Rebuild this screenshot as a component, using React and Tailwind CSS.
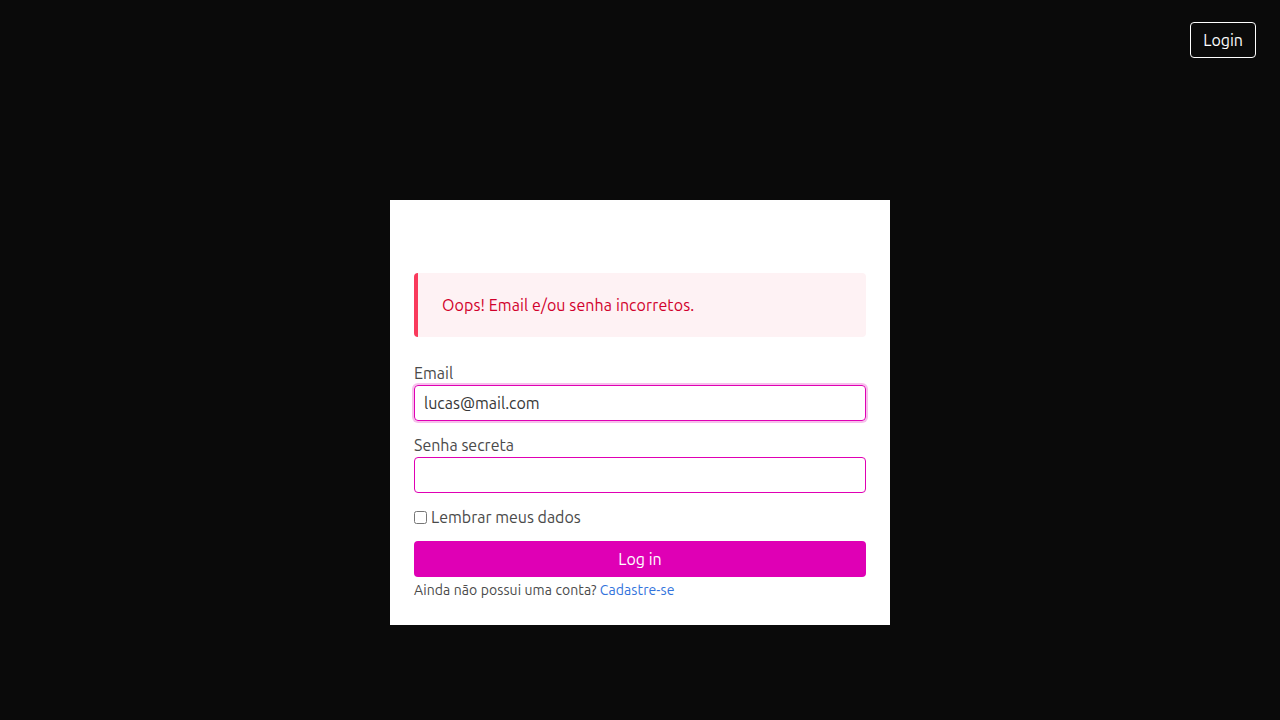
import React from 'react';

export default function App() {
  return (
    <div className="min-h-screen w-full bg-[#0a0a0a] flex flex-col font-['Ubuntu','Noto_Sans',sans-serif] text-[16px]">
      {/* Top bar */}
      <div className="flex justify-end pt-[22px] pr-[24px]">
        <button className="h-[36px] px-[12px] border border-white rounded-[4px] text-white text-[16px] leading-none">
          Login
        </button>
      </div>

      {/* Login card */}
      <div className="flex justify-center mt-[142px]">
        <div className="w-[500px] bg-white px-[24px] pt-[73px] pb-[26px]">
          <div className="h-[64px] flex items-center bg-[#fef2f4] border-l-4 border-[#f93a5c] rounded-[4px] pl-[24px] text-[#d1002b] tracking-[0.1px]">
            Oops! Email e/ou senha incorretos.
          </div>

          <div className="mt-[24px] flex flex-col">
            <label className="text-[#4a4a4a] leading-[24px]">Email</label>
            <input
              defaultValue="lucas@mail.com"
              className="h-[36px] px-[9px] border border-[#e000b4] rounded-[4px] text-[#363636] outline-none shadow-[0_0_0_2px_rgba(224,0,180,0.25)]"
            />
          </div>

          <div className="mt-[12px] flex flex-col">
            <label className="text-[#4a4a4a] leading-[24px]">Senha secreta</label>
            <input
              type="password"
              className="h-[36px] px-[9px] border border-[#e000b4] rounded-[4px] outline-none"
            />
          </div>

          <label className="mt-[14px] flex items-center gap-[4px] text-[#4a4a4a] leading-[20px]">
            <input type="checkbox" className="w-[13px] h-[13px] m-0" />
            Lembrar meus dados
          </label>

          <button className="mt-[14px] w-full h-[36px] bg-[#df00b5] rounded-[4px] text-white">
            Log in
          </button>

          <p className="mt-[4px] text-[14px] text-[#4a4a4a] leading-[18px] tracking-[0.1px]">
            Ainda não possui uma conta? <a className="text-[#3273dc]">Cadastre-se</a>
          </p>
        </div>
      </div>
    </div>
  );
}
